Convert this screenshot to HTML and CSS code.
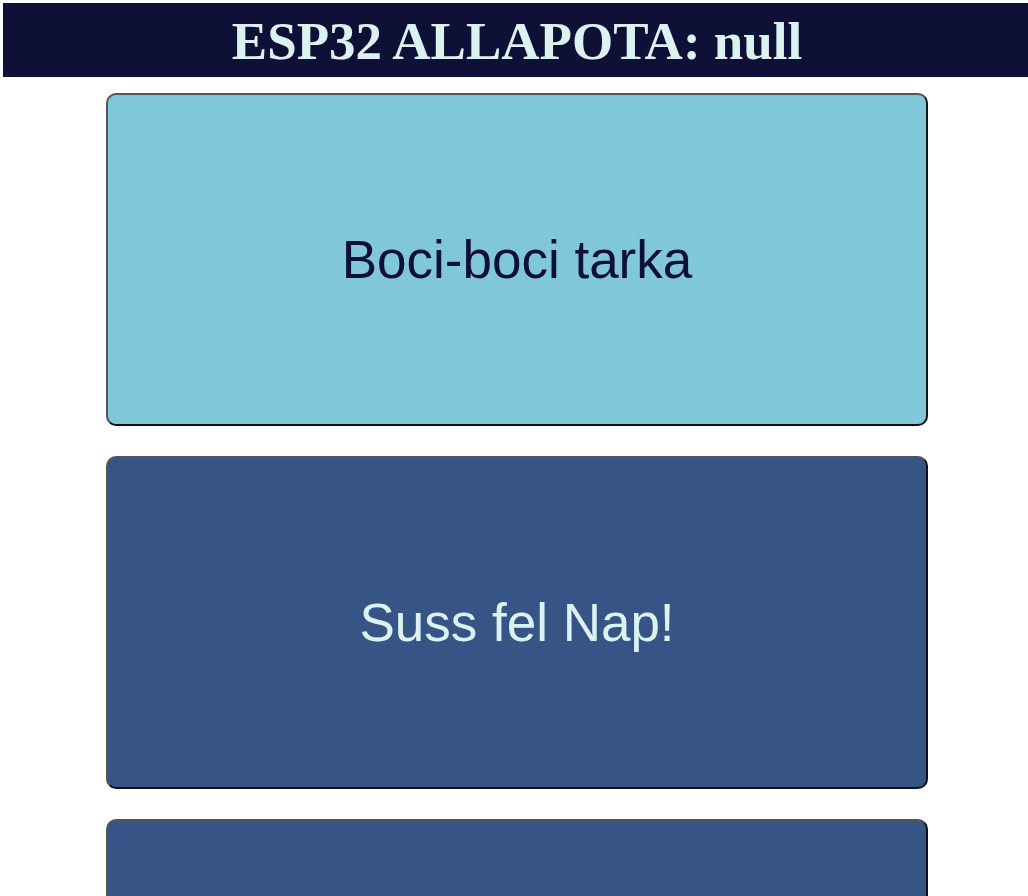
FILE: index.html
```html
<!DOCTYPE html>
<html lang="hu">
<head>
<meta charset="utf-8">
<title>ESP32</title>
<link rel="stylesheet" href="styles.css">
</head>
<body>
<div class="page">
  <header class="topbar">
    <h1 class="title">ESP32 ALLAPOTA: null</h1>
  </header>
  <main class="cards">
    <div class="card card-light">Boci-boci tarka</div>
    <div class="card card-dark">Suss fel Nap!</div>
    <div class="card card-dark"></div>
  </main>
</div>
</body>
</html>
```

FILE: styles.css
```css
html, body {
  margin: 0;
  padding: 0;
  background: #ffffff;
  overflow: hidden;
}
.page {
  width: 1028px;
  margin: 3px 0 0 3px;
}
.topbar {
  background: #0f1035;
  height: 74px;
  display: flex;
  align-items: center;
  justify-content: center;
}
.title {
  margin: 2px 0 0;
  font-family: "Liberation Serif", "Times New Roman", serif;
  font-weight: bold;
  font-size: 53px;
  line-height: 1;
  color: #dcf2f1;
}
.cards {
  display: flex;
  flex-direction: column;
  align-items: center;
  gap: 30px;
  padding-top: 16px;
}
.card {
  box-sizing: border-box;
  width: 80%;
  height: 333px;
  border: 2px solid;
  border-color: #555555 #111111 #111111 #555555;
  border-radius: 10px;
  display: flex;
  align-items: center;
  justify-content: center;
  font-family: "Liberation Sans", Arial, sans-serif;
  font-size: 53px;
}
.card-light {
  background: #7fc7d9;
  color: #0f1035;
}
.card-dark {
  background: #365486;
  color: #dcf2f1;
}
```
